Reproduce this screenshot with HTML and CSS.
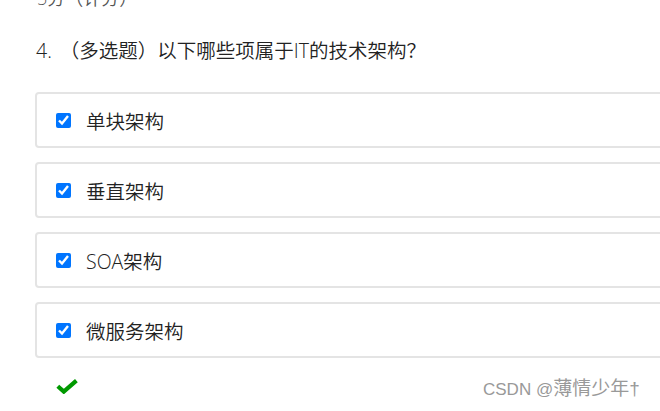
FILE: index.html
```html
<!DOCTYPE html>
<html lang="zh-CN">
<head>
<meta charset="utf-8">
<link rel="stylesheet" href="styles.css">
</head>
<body>
<div class="page">
  <div class="score">5分（计分）</div>
  <div class="question"><span class="num">4.</span>（多选题）以下哪些项属于IT的技术架构？</div>
  <div class="options">
    <label class="option"><input type="checkbox" checked><span>单块架构</span></label>
    <label class="option"><input type="checkbox" checked><span>垂直架构</span></label>
    <label class="option"><input type="checkbox" checked><span>SOA架构</span></label>
    <label class="option"><input type="checkbox" checked><span>微服务架构</span></label>
  </div>
  <div class="result">
    <svg class="ok" viewBox="0 0 22 15" width="22" height="15"><path d="M1.8 7.2 L7.8 12.6 L20.4 1.6" fill="none" stroke="#009900" stroke-width="4.2" stroke-linejoin="miter"/></svg>
  </div>
  <div class="watermark"><span class="wm-latin">CSDN @</span>薄情少年†</div>
</div>
</body>
</html>
```

FILE: styles.css
```css
html, body {
  margin: 0;
  padding: 0;
  background: #fff;
  overflow: hidden;
}
.page {
  width: 720px;
  height: 411px;
  padding-left: 35px;
  box-sizing: border-box;
  font-family: "Open Sans", "Noto Sans CJK SC", sans-serif;
  font-weight: 350;
  color: #222;
  position: relative;
}
.score {
  font-size: 18px;
  line-height: 20px;
  color: #555;
  margin-top: -12px;
  padding-left: 2px;
}
.question {
  font-size: 19.5px;
  line-height: 26px;
  margin-top: 30px;
  padding-left: 1px;
}
.question .num {
  margin-right: 8px;
}
.options {
  display: flex;
  flex-direction: column;
  gap: 14px;
  margin-top: 28px;
}
.option {
  display: flex;
  align-items: center;
  height: 56px;
  box-sizing: border-box;
  border: 2px solid #e4e4e4;
  border-radius: 4px;
  padding-left: 18px;
  font-size: 19.5px;
}
.option input {
  width: 15px;
  height: 15px;
  margin: 0 15px 0 1px;
  accent-color: #0075ff;
}
.result {
  display: flex;
  padding-left: 21px;
  margin-top: 21px;
}
.watermark {
  position: absolute;
  left: 483px;
  top: 391px;
  font-size: 19px;
  line-height: 20px;
  font-weight: 400;
  color: #999;
  font-family: "Liberation Sans", "Noto Sans CJK SC", sans-serif;
}
.wm-latin {
  font-size: 17px;
}
```
